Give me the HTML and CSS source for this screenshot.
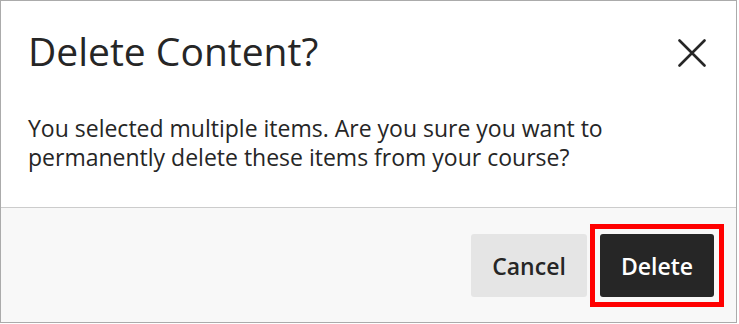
FILE: index.html
```html
<!DOCTYPE html>
<html>
<head>
<meta charset="utf-8">
<link rel="stylesheet" href="styles.css">
</head>
<body>
<div class="dialog">
  <div class="header">
    <h1 class="title">Delete Content?</h1>
    <button class="close" aria-label="Close">
      <svg width="28" height="28" viewBox="0 0 28 28"><path d="M1.5 1.5 L26.5 26.5 M26.5 1.5 L1.5 26.5" stroke="#262626" stroke-width="2.6" stroke-linecap="round" fill="none"/></svg>
    </button>
  </div>
  <p class="message">You selected multiple items. Are you sure you want to permanently delete these items from your course?</p>
  <div class="footer">
    <button class="btn btn-cancel">Cancel</button>
    <button class="btn btn-delete">Delete</button>
  </div>
</div>
</body>
</html>
```
FILE: styles.css
```css
html, body {
  margin: 0;
  padding: 0;
  background: #ffffff;
}
body {
  font-family: "Open Sans", "Noto Sans", sans-serif;
  color: #262626;
}
.dialog {
  width: 735px;
  height: 321px;
  border: 1px solid #ababab;
  display: flex;
  flex-direction: column;
  background: #ffffff;
}
.header {
  display: flex;
  justify-content: space-between;
  align-items: flex-start;
  padding: 26px 30px 0 27px;
}
.title {
  margin: 0;
  font-size: 39px;
  line-height: 48px;
  font-weight: 400;
}
.close {
  margin-top: 12px;
  padding: 0;
  border: 0;
  background: none;
  width: 28px;
  height: 28px;
  display: block;
}
.close svg { display: block; }
.message {
  margin: 0;
  padding: 39px 100px 35px 27px;
  font-size: 23px;
  line-height: 29px;
  border-bottom: 1px solid #cccccc;
}
.footer {
  flex: 1;
  background: #f8f8f8;
  display: flex;
  justify-content: flex-end;
  align-items: flex-start;
  gap: 13px;
  padding: 26px 22px 0 0;
}
.btn {
  font-family: "Open Sans", "Noto Sans", sans-serif;
  height: 63px;
  border: 0;
  border-radius: 3px;
  font-size: 23px;
  font-weight: 600;
  padding: 0;
}
.btn-cancel {
  width: 116px;
  background: #e5e5e5;
  color: #262626;
}
.btn-delete {
  position: relative;
  width: 114px;
  background: #262626;
  color: #ffffff;
}
.btn-delete::after {
  content: "";
  position: absolute;
  left: -10px;
  top: -10px;
  right: -10px;
  bottom: -10px;
  border: 5px solid #ff0000;
}
```
